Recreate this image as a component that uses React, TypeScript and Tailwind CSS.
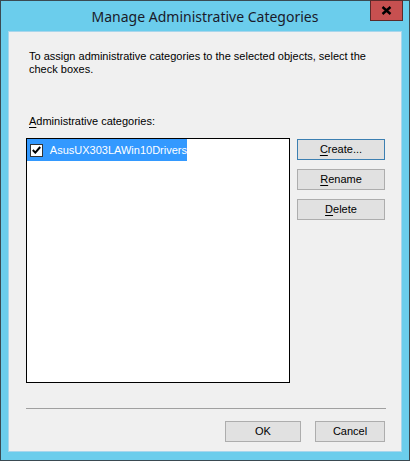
import React from 'react'

const Btn = ({ label, u, w = 'w-[88px]', focus = false }: { label: string; u?: boolean; w?: string; focus?: boolean }) => (
  <div
    className={`${w} h-[21px] flex items-center justify-center bg-[#e1e1e1] border ${focus ? 'border-[#3c7fb1]' : 'border-[#adadad]'} text-[11px] text-black leading-none`}
  >
    {u ? (
      <span>
        <span className="underline underline-offset-2">{label[0]}</span>
        {label.slice(1)}
      </span>
    ) : (
      <span>{label}</span>
    )}
  </div>
)

const App = () => {
  return (
    <div
      className="w-[410px] h-[461px] bg-[#6bcdec] border border-[#3a4a52] flex flex-col"
      style={{ fontFamily: '"Liberation Sans", Arial, sans-serif' }}
    >
      {/* Title bar */}
      <div className="h-[30px] flex items-start relative">
        <div
          className="flex-1 text-center pt-[5px] text-[14px] text-[#1a1a2a]"
          style={{ fontFamily: '"Noto Sans", "Open Sans", sans-serif' }}
        >
          Manage Administrative Categories
        </div>
        <div className="absolute right-[6px] top-[-1px] w-[33px] h-[21px] bg-[#c75050] border border-[#5a2a2a] flex items-center justify-center">
          <svg width="11" height="9" viewBox="0 0 11 9">
            <path d="M1.5 1 L9.5 8 M9.5 1 L1.5 8" stroke="#000" strokeWidth="2.4" />
          </svg>
        </div>
      </div>

      {/* Client area */}
      <div className="mx-[7px] h-[421px] bg-[#f0f0f0] border border-[#a8d6ec] pl-[17px] pt-[18px]">
        <p className="ml-[3px] text-[11px] leading-[13px] text-black">
          To assign administrative categories to the selected objects, select the
          <br />
          check boxes.
        </p>

        <div className="ml-[3px] mt-[39px] text-[11px] leading-[13px] text-black">
          <span className="underline underline-offset-2">A</span>dministrative categories:
        </div>

        <div className="mt-[10px] flex items-start gap-[7px]">
          <div className="w-[264px] h-[245px] bg-white border border-black">
            <div className="w-[160px] h-[22px] bg-[#3399ff] flex items-center">
              <div className="ml-[3px] w-[13px] h-[13px] bg-white border border-[#333] flex items-center justify-center">
                <svg width="9" height="8" viewBox="0 0 9 8">
                  <path d="M0.8 4 L3.3 6.6 L8.2 1" fill="none" stroke="#000" strokeWidth="2" />
                </svg>
              </div>
              <span className="ml-[7px] text-[11px] text-white">AsusUX303LAWin10Drivers</span>
            </div>
          </div>

          <div className="mt-[1px] flex flex-col gap-[9px]">
            <Btn label="Create..." u focus />
            <Btn label="Rename" u />
            <Btn label="Delete" u />
          </div>
        </div>

        <div className="mt-[25px] w-[360px] h-[1px] bg-[#a0a0a0]" />

        <div className="mt-[12px] w-[359px] flex justify-end gap-[14px]">
          <Btn label="OK" w="w-[76px]" />
          <Btn label="Cancel" w="w-[70px]" />
        </div>
      </div>
    </div>
  )
}

export default App
